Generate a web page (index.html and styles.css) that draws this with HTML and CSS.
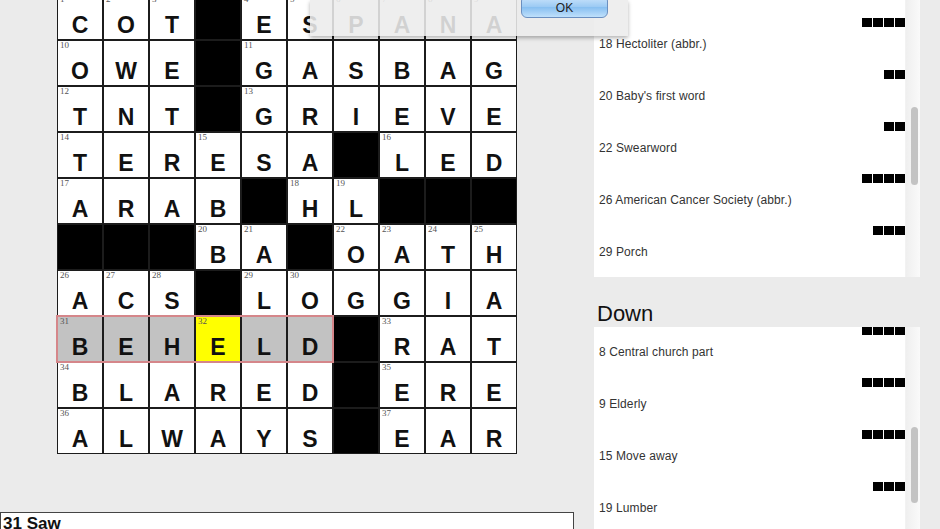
FILE: index.html
```html
<!DOCTYPE html>
<html>
<head>
  <meta charset="UTF-8">
  <title>Crossword</title>
  <link rel="stylesheet" href="styles.css">
</head>
<body>
  <div id="board">
    <div class="grid">
      <!-- row 1 -->
      <div class="cell"><span class="num">1</span>C</div>
      <div class="cell"><span class="num">2</span>O</div>
      <div class="cell"><span class="num">3</span>T</div>
      <div class="cell block"></div>
      <div class="cell"><span class="num">4</span>E</div>
      <div class="cell"><span class="num">5</span>S</div>
      <div class="cell"><span class="num">6</span>P</div>
      <div class="cell"><span class="num">7</span>A</div>
      <div class="cell"><span class="num">8</span>N</div>
      <div class="cell"><span class="num">9</span>A</div>
      <!-- row 2 -->
      <div class="cell"><span class="num">10</span>O</div>
      <div class="cell">W</div>
      <div class="cell">E</div>
      <div class="cell block"></div>
      <div class="cell"><span class="num">11</span>G</div>
      <div class="cell">A</div>
      <div class="cell">S</div>
      <div class="cell">B</div>
      <div class="cell">A</div>
      <div class="cell">G</div>
      <!-- row 3 -->
      <div class="cell"><span class="num">12</span>T</div>
      <div class="cell">N</div>
      <div class="cell">T</div>
      <div class="cell block"></div>
      <div class="cell"><span class="num">13</span>G</div>
      <div class="cell">R</div>
      <div class="cell">I</div>
      <div class="cell">E</div>
      <div class="cell">V</div>
      <div class="cell">E</div>
      <!-- row 4 -->
      <div class="cell"><span class="num">14</span>T</div>
      <div class="cell">E</div>
      <div class="cell">R</div>
      <div class="cell"><span class="num">15</span>E</div>
      <div class="cell">S</div>
      <div class="cell">A</div>
      <div class="cell block"></div>
      <div class="cell"><span class="num">16</span>L</div>
      <div class="cell">E</div>
      <div class="cell">D</div>
      <!-- row 5 -->
      <div class="cell"><span class="num">17</span>A</div>
      <div class="cell">R</div>
      <div class="cell">A</div>
      <div class="cell">B</div>
      <div class="cell block"></div>
      <div class="cell"><span class="num">18</span>H</div>
      <div class="cell"><span class="num">19</span>L</div>
      <div class="cell block"></div>
      <div class="cell block"></div>
      <div class="cell block"></div>
      <!-- row 6 -->
      <div class="cell block"></div>
      <div class="cell block"></div>
      <div class="cell block"></div>
      <div class="cell"><span class="num">20</span>B</div>
      <div class="cell"><span class="num">21</span>A</div>
      <div class="cell block"></div>
      <div class="cell"><span class="num">22</span>O</div>
      <div class="cell"><span class="num">23</span>A</div>
      <div class="cell"><span class="num">24</span>T</div>
      <div class="cell"><span class="num">25</span>H</div>
      <!-- row 7 -->
      <div class="cell"><span class="num">26</span>A</div>
      <div class="cell"><span class="num">27</span>C</div>
      <div class="cell"><span class="num">28</span>S</div>
      <div class="cell block"></div>
      <div class="cell"><span class="num">29</span>L</div>
      <div class="cell"><span class="num">30</span>O</div>
      <div class="cell">G</div>
      <div class="cell">G</div>
      <div class="cell">I</div>
      <div class="cell">A</div>
      <!-- row 8: selected word -->
      <div class="cell word"><span class="num">31</span>B<span class="word-frame"></span></div>
      <div class="cell word">E</div>
      <div class="cell word">H</div>
      <div class="cell word current"><span class="num">32</span>E</div>
      <div class="cell word">L</div>
      <div class="cell word">D</div>
      <div class="cell block"></div>
      <div class="cell"><span class="num">33</span>R</div>
      <div class="cell">A</div>
      <div class="cell">T</div>
      <!-- row 9 -->
      <div class="cell"><span class="num">34</span>B</div>
      <div class="cell">L</div>
      <div class="cell">A</div>
      <div class="cell">R</div>
      <div class="cell">E</div>
      <div class="cell">D</div>
      <div class="cell block"></div>
      <div class="cell"><span class="num">35</span>E</div>
      <div class="cell">R</div>
      <div class="cell">E</div>
      <!-- row 10 -->
      <div class="cell"><span class="num">36</span>A</div>
      <div class="cell">L</div>
      <div class="cell">W</div>
      <div class="cell">A</div>
      <div class="cell">Y</div>
      <div class="cell">S</div>
      <div class="cell block"></div>
      <div class="cell"><span class="num">37</span>E</div>
      <div class="cell">A</div>
      <div class="cell">R</div>
    </div>

    <div id="clueBar">31 Saw</div>
  </div>

  <div id="lists">
    <div class="panel across">
      <div class="clue-list">
        <div class="len tail"><i></i><i></i><i></i><i></i></div>
        <div class="clue"><div class="text">18 Hectoliter (abbr.)</div><div class="len"><i></i><i></i></div></div>
        <div class="clue"><div class="text">20 Baby's first word</div><div class="len"><i></i><i></i></div></div>
        <div class="clue"><div class="text">22 Swearword</div><div class="len"><i></i><i></i><i></i><i></i></div></div>
        <div class="clue"><div class="text">26 American Cancer Society (abbr.)</div><div class="len"><i></i><i></i><i></i></div></div>
        <div class="clue"><div class="text">29 Porch</div><div class="len"><i></i><i></i><i></i><i></i><i></i><i></i></div></div>
      </div>
      <div class="track"><div class="thumb"></div></div>
    </div>

    <div class="heading">Down</div>

    <div class="panel down">
      <div class="clue-list">
        <div class="len tail"><i></i><i></i><i></i><i></i></div>
        <div class="clue"><div class="text">8 Central church part</div><div class="len"><i></i><i></i><i></i><i></i></div></div>
        <div class="clue"><div class="text">9 Elderly</div><div class="len"><i></i><i></i><i></i><i></i></div></div>
        <div class="clue"><div class="text">15 Move away</div><div class="len"><i></i><i></i><i></i></div></div>
        <div class="clue"><div class="text">19 Lumber</div><div class="len"><i></i><i></i><i></i></div></div>
      </div>
      <div class="track"><div class="thumb"></div></div>
    </div>
  </div>

  <div id="alert">
    <button class="ok-btn">OK</button>
  </div>
</body>
</html>
```

FILE: styles.css
```css
body {
  margin: 0;
  height: 529px;
  overflow: hidden;
  display: flex;
  background: #ebebeb;
  font-family: "Liberation Sans", Arial, sans-serif;
  color: #333;
}

#board {
  width: 575px;
  display: flex;
  flex-direction: column;
}

.grid {
  display: grid;
  grid-template-columns: repeat(10, 44px);
  grid-auto-rows: 44px;
  gap: 2px;
  padding: 1px;
  width: fit-content;
  margin: -6px 0 0 57px;
  background: #1c1c1c;
}

.cell {
  position: relative;
  display: flex;
  justify-content: center;
  align-items: flex-end;
  padding-bottom: 2px;
  box-sizing: border-box;
  background: #fff;
  color: #111;
  font-size: 23px;
  font-weight: bold;
  line-height: 1;
}

.cell.block {
  background: #000;
}

.cell.word {
  background: #c2c2c2;
}

.cell.current {
  background: #ffff00;
}

.num {
  position: absolute;
  top: 0;
  left: 2px;
  font-family: "Liberation Serif", serif;
  font-size: 9px;
  font-weight: normal;
  color: #555;
}

/* outline round the selected word, six cells wide */
.word-frame {
  position: absolute;
  left: -2px;
  top: -2px;
  width: 278px;
  height: 48px;
  box-sizing: border-box;
  border: 2px solid #d5868a;
  z-index: 2;
  pointer-events: none;
}

#clueBar {
  margin-top: 58px;
  width: 574px;
  height: 30px;
  box-sizing: border-box;
  border: 1px solid #444;
  background: #fff;
  padding: 1px 2px;
  font-size: 17px;
  font-weight: bold;
  color: #111;
}

#lists {
  width: 326px;
  margin-left: 19px;
  display: flex;
  flex-direction: column;
}

.panel {
  display: flex;
  background: #fff;
  overflow: hidden;
}

.panel.across {
  height: 277px;
}

.panel.down {
  flex: 1;
}

.clue-list {
  flex: 1;
  padding-left: 5px;
}

.clue {
  height: 52px;
  padding-top: 6px;
  box-sizing: border-box;
}

.clue .text {
  font-size: 12px;
  letter-spacing: 0.1px;
  line-height: 16px;
  color: #333;
}

/* answer length, one square per letter */
.len {
  display: flex;
  justify-content: flex-end;
  gap: 1px;
  margin-top: 18px;
}

.len i {
  width: 10px;
  height: 9px;
  background: #000;
}

.len.tail {
  margin-bottom: 3px;
}

.down .len.tail {
  margin-top: -1px;
}

.track {
  width: 14px;
  background: linear-gradient(to right, #efefef, #fafafa);
  border-left: 1px solid #f2f2f2;
}

.thumb {
  width: 7px;
  margin-left: 5px;
  border-radius: 4px;
  background: #c3c3c3;
}

.across .thumb {
  margin-top: 107px;
  height: 78px;
}

.down .thumb {
  margin-top: 100px;
  height: 76px;
}

.heading {
  height: 50px;
  box-sizing: border-box;
  padding: 26px 0 0 3px;
  font-size: 22px;
  line-height: 22px;
  color: #111;
}

/* sheet dropped over the board */
#alert {
  position: absolute;
  left: 310px;
  top: 0;
  width: 318px;
  height: 36px;
  display: flex;
  justify-content: flex-end;
  align-items: flex-start;
  background: rgba(236, 236, 236, 0.88);
  box-shadow: 0 2px 4px rgba(0, 0, 0, 0.3);
}

.ok-btn {
  margin: -5px 20px 0 0;
  width: 87px;
  height: 23px;
  padding-top: 4px;
  border: 1px solid #6a8fc0;
  border-radius: 6px;
  background: linear-gradient(#cfe6fc, #9dcbf4 50%, #84bdf0 51%, #bfe0fb);
  font-family: "Liberation Sans", Arial, sans-serif;
  font-size: 12px;
  color: #222;
}
```
